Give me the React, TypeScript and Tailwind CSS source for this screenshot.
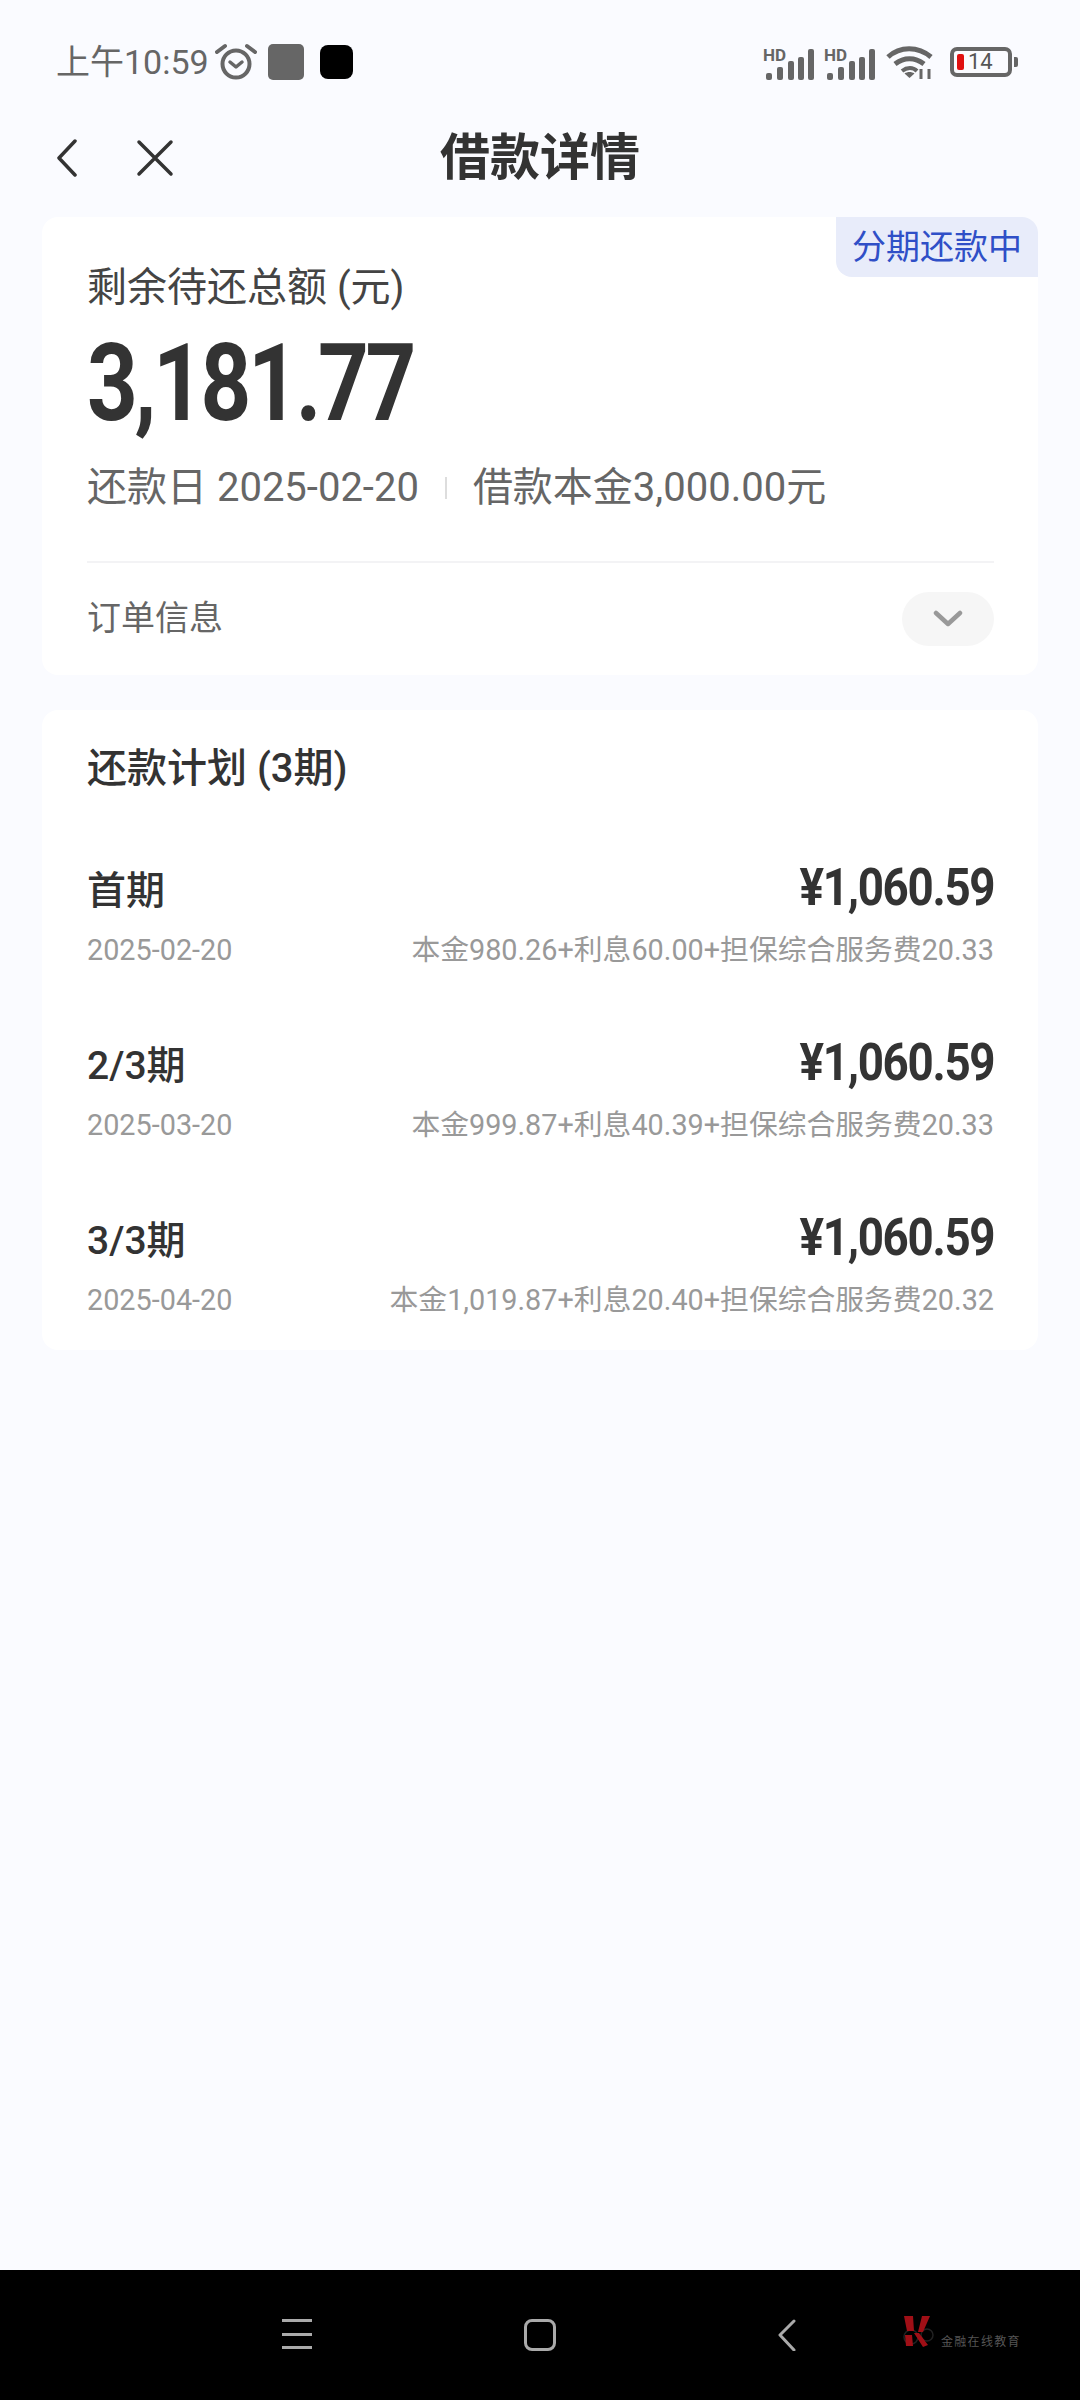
const cjk = "font-['Roboto','Noto_Sans_CJK_SC',sans-serif]";

const plans = [
  { name: "首期", date: "2025-02-20", detail: "本金980.26+利息60.00+担保综合服务费20.33" },
  { name: "2/3期", date: "2025-03-20", detail: "本金999.87+利息40.39+担保综合服务费20.33" },
  { name: "3/3期", date: "2025-04-20", detail: "本金1,019.87+利息20.40+担保综合服务费20.32" },
];

const Signal = () => (
  <svg width="51" height="36" viewBox="0 -4 51 36" fill="#666">
    <text x="0" y="13" fontSize="17" fontWeight="700" fontFamily="Roboto, sans-serif">HD</text>
    <rect x="3" y="25" width="6" height="7" rx="2" />
    <rect x="14" y="19" width="6" height="13" rx="2" />
    <rect x="25" y="13" width="6" height="19" rx="2" />
    <rect x="35" y="9" width="6" height="23" rx="2" />
    <rect x="45" y="1" width="6" height="31" rx="2" />
  </svg>
);

const StatusBar = () => (
  <div className="flex h-[124px] items-center justify-between pl-[56px] pr-[68px] text-[#666]">
    <div className="flex items-center">
      <span className={`${cjk} text-[34px] leading-none`}>上午10:59</span>
      <svg className="ml-[6px]" width="42" height="38" viewBox="0 0 42 38" fill="none" stroke="#666" strokeLinecap="round">
        <circle cx="21" cy="21" r="13.5" strokeWidth="4" />
        <path d="M15 19l6 5 6-5" strokeWidth="3.5" strokeLinejoin="round" />
        <path d="M2 9l8-6M40 9l-8-6" strokeWidth="4" />
      </svg>
      <div className="ml-[11px] h-[36px] w-[36px] rounded-[5px] bg-[#666]" />
      <div className="ml-[16px] h-[34px] w-[33px] rounded-[8px] bg-black" />
    </div>
    <div className="flex items-center">
      <Signal />
      <div className="ml-[10px]">
        <Signal />
      </div>
      <svg className="ml-[11px]" width="48" height="34" viewBox="0 0 48 34" fill="none" stroke="#666" strokeWidth="5">
        <path d="M2 12C14 1 32 1 45 12" />
        <path d="M9 19c9-7 20-7 29 0" />
        <path d="M16 26c5-4 11-4 15 0" strokeWidth="4" />
        <path d="M23.500 33l-5-4.500c3-2 7-2 10 0z" fill="#666" stroke="none" />
        <path d="M35 34V24M43 34V24" strokeWidth="3" />
      </svg>
      <div className="relative ml-[16px] flex h-[30px] w-[62px] items-center rounded-[7px] border-[4px] border-[#666] pl-[3px]">
        <div className="h-[16px] w-[7px] rounded-[2px] bg-[#e01010]" />
        <span className="ml-[4px] font-['Roboto',sans-serif] text-[22px] leading-none text-[#555]">14</span>
        <div className="absolute -right-[10px] h-[10px] w-[4px] rounded-r-[2px] bg-[#666]" />
      </div>
    </div>
  </div>
);

const NavBar = () => (
  <div className="relative flex h-[93px] items-center pb-[26px] pl-[54px]">
    <svg width="26" height="38" viewBox="0 0 26 38" fill="none" stroke="#333" strokeWidth="3.500" strokeLinecap="round" strokeLinejoin="round">
      <path d="M21 2L5 19l16 17" />
    </svg>
    <svg className="ml-[56px]" width="38" height="38" viewBox="0 0 38 38" fill="none" stroke="#333" strokeWidth="3.500" strokeLinecap="round">
      <path d="M3 3l32 32M35 3L3 35" />
    </svg>
    <h1 className={`${cjk} absolute left-0 right-0 top-[4px] text-center text-[50px] font-bold leading-[60px] text-[#333]`}>借款详情</h1>
  </div>
);

export default function App() {
  return (
    <div className={`${cjk} flex min-h-[2400px] w-[1080px] flex-col bg-[#fafbff]`}>
      <StatusBar />
      <NavBar />
      <main className="flex flex-1 flex-col gap-[35px] px-[42px]">
        <section className="relative h-[458px] rounded-[16px] bg-white pl-[45px] pr-[44px] pt-[46px]">
          <div className="absolute right-0 top-0 flex h-[60px] w-[202px] items-center justify-center rounded-bl-[16px] rounded-tr-[16px] bg-[#e8ecfa] text-[34px] leading-none text-[#2f4fc7]">
            分期还款中
          </div>
          <p className="text-[40px] leading-[50px] text-[#444]">剩余待还总额 (元)</p>
          <p className="mt-[15px] origin-left scale-x-[.82] text-[108px] font-bold leading-[110px] tracking-[-4px] text-[#333]">3,181.77</p>
          <div className="mt-[25px] flex items-center text-[40px] leading-[50px] text-[#666]">
            <span>还款日 2025-02-20</span>
            <span className="mx-[26px] h-[22px] w-[2px] bg-[#ddd]" />
            <span>借款本金3,000.00元</span>
          </div>
          <div className="mt-[48px] border-t-2 border-[#f3f3f5]" />
          <div className="mt-[29px] flex items-center justify-between">
            <span className="-mt-[2px] text-[34px] leading-[54px] text-[#666]">订单信息</span>
            <div className="flex h-[54px] w-[92px] items-center justify-center rounded-full bg-[#f6f6f6]">
              <svg width="30" height="18" viewBox="0 0 30 18" fill="none" stroke="#999" strokeWidth="4.500" strokeLinecap="round" strokeLinejoin="round">
                <path d="M3 3l12 11L27 3" />
              </svg>
            </div>
          </div>
        </section>
        <section className="h-[640px] rounded-[16px] bg-white pl-[45px] pr-[44px] pt-[34px]">
          <h2 className="text-[40px] font-medium leading-[50px] text-[#333]">还款计划 (3期)</h2>
          <div className="mt-[72px] flex flex-col gap-[67px]">
            {plans.map((p) => (
              <div key={p.name} className="flex flex-col gap-[11px]">
                <div className="flex items-center justify-between">
                  <span className="text-[39px] font-medium leading-[50px] text-[#333]">{p.name}</span>
                  <span className="-mt-[6px] origin-right scale-x-[.88] text-[52px] font-bold leading-[50px] tracking-[-1.5px] text-[#333]">¥1,060.59</span>
                </div>
                <div className="flex items-center justify-between text-[28.8px] leading-[47px] text-[#999]">
                  <span>{p.date}</span>
                  <span>{p.detail}</span>
                </div>
              </div>
            ))}
          </div>
        </section>
      </main>
      <footer className="relative flex h-[130px] items-start bg-black pt-[49px]">
        <div className="ml-[282px] flex h-[30px] w-[30px] flex-col justify-between">
          <div className="h-[3px] bg-[#aaa]" />
          <div className="h-[3px] bg-[#aaa]" />
          <div className="h-[3px] bg-[#aaa]" />
        </div>
        <div className="ml-[212px] h-[32px] w-[32px] rounded-[8px] border-[3px] border-[#aaa]" />
        <svg className="ml-[222px]" width="18" height="32" viewBox="0 0 18 32" fill="none" stroke="#aaa" strokeWidth="3" strokeLinecap="round" strokeLinejoin="round">
          <path d="M16 2L2 16l14 15" />
        </svg>
        <div className="ml-[107px] -mt-[3px] flex items-end">
          <svg width="32" height="32" viewBox="0 0 32 32">
            <circle cx="8" cy="21" r="7" fill="none" stroke="#222" strokeWidth="1.5" />
            <circle cx="24" cy="19" r="6" fill="none" stroke="#222" strokeWidth="1.5" />
            <path fill="#a00f16" d="M1 0h9l1 15H4zM19 0h8l-7 16h-5zM2 19h7l1 11H3zM11 17h5l9 12-5 2z" />
          </svg>
          <span className="ml-[6px] font-['Noto_Sans_CJK_SC',sans-serif] text-[12px] leading-[14px] tracking-[1.3px] text-[#555]">金融在线教育</span>
        </div>
      </footer>
    </div>
  );
}
